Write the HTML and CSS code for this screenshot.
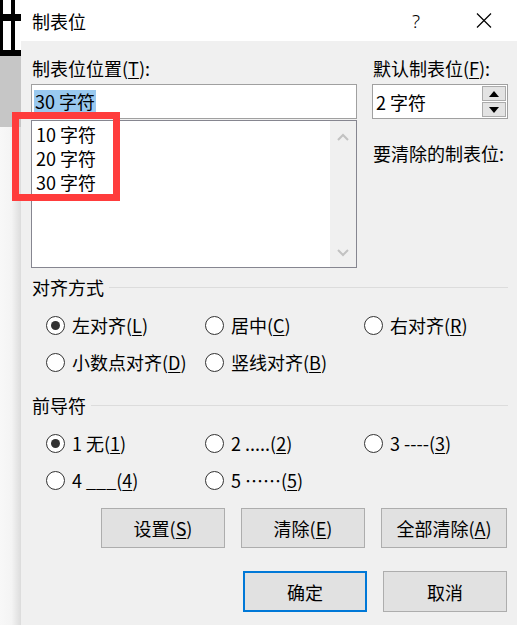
FILE: index.html
```html
<!DOCTYPE html>
<html lang="zh-CN">
<head>
<meta charset="utf-8">
<title>制表位</title>
<link rel="stylesheet" href="styles.css">
</head>
<body>
<div class="screen">
  <div class="desk">
    <svg class="doc-grid" width="21" height="56" viewBox="0 0 21 56">
      <rect width="21" height="56" fill="#fff"/>
      <rect x="0" y="0" width="3" height="56" fill="#000"/>
      <rect x="11" y="0" width="4" height="56" fill="#000"/>
      <rect x="0" y="14" width="21" height="7" fill="#000"/>
      <rect x="0" y="50" width="21" height="6" fill="#000"/>
    </svg>
    <div class="desk-gray"></div>
    <div class="desk-shadow"></div>
  </div>
  <div class="dialog">
    <div class="titlebar">
      <span class="title">制表位</span>
      <span class="tb-help">?</span>
      <svg class="tb-close" width="16" height="15" viewBox="0 0 16 15">
        <path d="M1 0.5 L15 14.5 M15 0.5 L1 14.5" stroke="#000" stroke-width="1.2" fill="none"/>
      </svg>
    </div>
    <div class="body">
      <div class="top">
        <div class="col-left">
          <div class="field-label">制表位位置(<u>T</u>):</div>
          <div class="textbox"><span class="sel">30 字符</span></div>
          <div class="tablist">
            <div class="tabitems">
              <div class="tabitem">10 字符</div>
              <div class="tabitem">20 字符</div>
              <div class="tabitem">30 字符</div>
            </div>
            <div class="vscroll">
              <svg width="12" height="8" viewBox="0 0 12 8"><path d="M1 7 L6 2 L11 7" stroke="#c2c2c2" stroke-width="2" fill="none"/></svg>
              <svg width="12" height="8" viewBox="0 0 12 8"><path d="M1 1 L6 6 L11 1" stroke="#c2c2c2" stroke-width="2" fill="none"/></svg>
            </div>
          </div>
        </div>
        <div class="col-right">
          <div class="field-label">默认制表位(<u>F</u>):</div>
          <div class="spin">
            <span class="spin-text">2 字符</span>
            <div class="spin-btns">
              <span class="spin-btn"><svg width="10" height="6" viewBox="0 0 10 6"><path d="M0 6 L5 0 L10 6 Z" fill="#000"/></svg></span>
              <span class="spin-btn"><svg width="10" height="6" viewBox="0 0 10 6"><path d="M0 0 L10 0 L5 6 Z" fill="#000"/></svg></span>
            </div>
          </div>
          <div class="clear-label">要清除的制表位:</div>
        </div>
      </div>

      <div class="group-head"><span>对齐方式</span><i class="rule"></i></div>
      <div class="radio-grid">
        <div class="radio"><span class="dot on"></span><span>左对齐(<u>L</u>)</span></div>
        <div class="radio"><span class="dot"></span><span>居中(<u>C</u>)</span></div>
        <div class="radio"><span class="dot"></span><span>右对齐(<u>R</u>)</span></div>
        <div class="radio"><span class="dot"></span><span>小数点对齐(<u>D</u>)</span></div>
        <div class="radio"><span class="dot"></span><span>竖线对齐(<u>B</u>)</span></div>
      </div>

      <div class="group-head lead"><span>前导符</span><i class="rule"></i></div>
      <div class="radio-grid">
        <div class="radio"><span class="dot on"></span><span>1 无(<u>1</u>)</span></div>
        <div class="radio"><span class="dot"></span><span>2 .....(<u>2</u>)</span></div>
        <div class="radio"><span class="dot"></span><span>3 ----(<u>3</u>)</span></div>
        <div class="radio"><span class="dot"></span><span>4 ___(<u>4</u>)</span></div>
        <div class="radio"><span class="dot"></span><span>5 ……(<u>5</u>)</span></div>
      </div>

      <div class="btn-row">
        <div class="btn">设置(<u>S</u>)</div>
        <div class="btn">清除(<u>E</u>)</div>
        <div class="btn wide">全部清除(<u>A</u>)</div>
      </div>
      <div class="btn-row ok-row">
        <div class="btn tall default">确定</div>
        <div class="btn tall">取消</div>
      </div>
    </div>
  </div>
  <div class="annotation"></div>
</div>
</body>
</html>
```

FILE: styles.css
```css
html, body {
  margin: 0;
  padding: 0;
}
body {
  font-family: "Noto Sans CJK SC", "Microsoft YaHei", sans-serif;
  font-size: 18px;
  color: #000;
  background: #f0f0f0;
  overflow: hidden;
}
u {
  text-decoration: underline;
  text-underline-offset: 2px;
  text-decoration-thickness: 1px;
}
.screen {
  position: relative;
  display: flex;
  width: 517px;
  height: 625px;
  overflow: hidden;
}
.desk {
  width: 21px;
  flex: none;
  display: flex;
  flex-direction: column;
}
.doc-grid {
  display: block;
}
.desk-gray {
  height: 71px;
  background: #c6c6c6;
}
.desk-shadow {
  flex: 1;
  background: linear-gradient(to right, #f8f8f8 0%, #f4f4f4 55%, #dcdcdc 100%);
}
.dialog {
  flex: 1;
  display: flex;
  flex-direction: column;
  background: #f0f0f0;
}
.titlebar {
  height: 41px;
  flex: none;
  background: #fff;
  display: flex;
  align-items: center;
  padding: 0 25px 0 11px;
}
.title {
  line-height: 24px;
}
.tb-help {
  margin-left: auto;
  margin-right: 56px;
  font-family: "Noto Sans", sans-serif;
  font-weight: 300;
  font-size: 19px;
  line-height: 24px;
}
.tb-close {
  display: block;
}
.body {
  padding: 15px 9px 0 10px;
}
.top {
  display: grid;
  grid-template-columns: 326px 136px;
  column-gap: 15px;
}
.field-label {
  height: 24px;
  line-height: 24px;
  white-space: nowrap;
  padding-left: 1px;
}
.textbox {
  margin-top: 4px;
  height: 35px;
  box-sizing: border-box;
  border: 1px solid #a0a0a0;
  background: #fff;
  display: flex;
  align-items: center;
  padding-left: 2px;
}
.sel {
  background: #99c9ef;
  line-height: 23px;
  padding: 0 1px;
}
.tablist {
  margin-top: 1px;
  height: 148px;
  box-sizing: border-box;
  border: 1px solid #868690;
  background: #fff;
  display: flex;
}
.tabitems {
  flex: 1;
  padding: 1px 0 0 4px;
}
.tabitem {
  line-height: 24px;
}
.vscroll {
  width: 26px;
  background: #f0f0f0;
  display: flex;
  flex-direction: column;
  align-items: center;
  justify-content: space-between;
  padding: 12px 0 10px;
  box-sizing: border-box;
}
.vscroll svg {
  display: block;
}
.spin {
  margin-top: 4px;
  height: 35px;
  box-sizing: border-box;
  border: 1px solid #a0a0a0;
  background: #fff;
  display: flex;
  align-items: center;
  padding-left: 3px;
}
.spin-text {
  line-height: 24px;
}
.spin-btns {
  margin-left: auto;
  align-self: stretch;
  display: flex;
  flex-direction: column;
  gap: 1px;
  padding: 1px 1px 1px 0;
}
.spin-btn {
  flex: 1;
  width: 24px;
  box-sizing: border-box;
  border: 1px solid #ababab;
  background: #e3e3e3;
  display: flex;
  align-items: center;
  justify-content: center;
}
.spin-btn svg {
  display: block;
}
.clear-label {
  margin-top: 22px;
  line-height: 24px;
  padding-left: 1px;
  white-space: nowrap;
}
.group-head {
  display: flex;
  align-items: center;
  gap: 5px;
  margin-top: 7px;
  line-height: 24px;
  padding-left: 1px;
}
.group-head.lead {
  margin-top: 19px;
}
.rule {
  flex: 1;
  height: 1px;
  background: #dcdcdc;
}
.radio-grid {
  display: grid;
  grid-template-columns: 159px 159px auto;
  row-gap: 13px;
  padding-left: 15px;
  margin-top: 14px;
}
.radio {
  display: flex;
  align-items: center;
  gap: 7px;
  line-height: 24px;
  white-space: nowrap;
}
.dot {
  width: 19px;
  height: 19px;
  flex: none;
  box-sizing: border-box;
  border: 1px solid #333;
  border-radius: 50%;
  background: #fff;
  display: flex;
  align-items: center;
  justify-content: center;
}
.dot.on::after {
  content: "";
  width: 9px;
  height: 9px;
  border-radius: 50%;
  background: #333;
}
.btn-row {
  display: flex;
  justify-content: flex-end;
  gap: 16px;
  margin-top: 16px;
  padding-right: 1px;
}
.ok-row {
  margin-top: 23px;
}
.btn {
  width: 124px;
  height: 40px;
  box-sizing: border-box;
  border: 1px solid #adadad;
  background: #e1e1e1;
  display: flex;
  align-items: center;
  justify-content: center;
  line-height: 24px;
  white-space: nowrap;
}
.btn.wide {
  width: 126px;
}
.btn.tall {
  height: 41px;
}
.btn.default {
  border: 2px solid #0078d7;
}
.annotation {
  position: absolute;
  left: 12px;
  top: 112px;
  width: 108px;
  height: 89px;
  box-sizing: border-box;
  border: 7px solid #ff3c3c;
}
```
